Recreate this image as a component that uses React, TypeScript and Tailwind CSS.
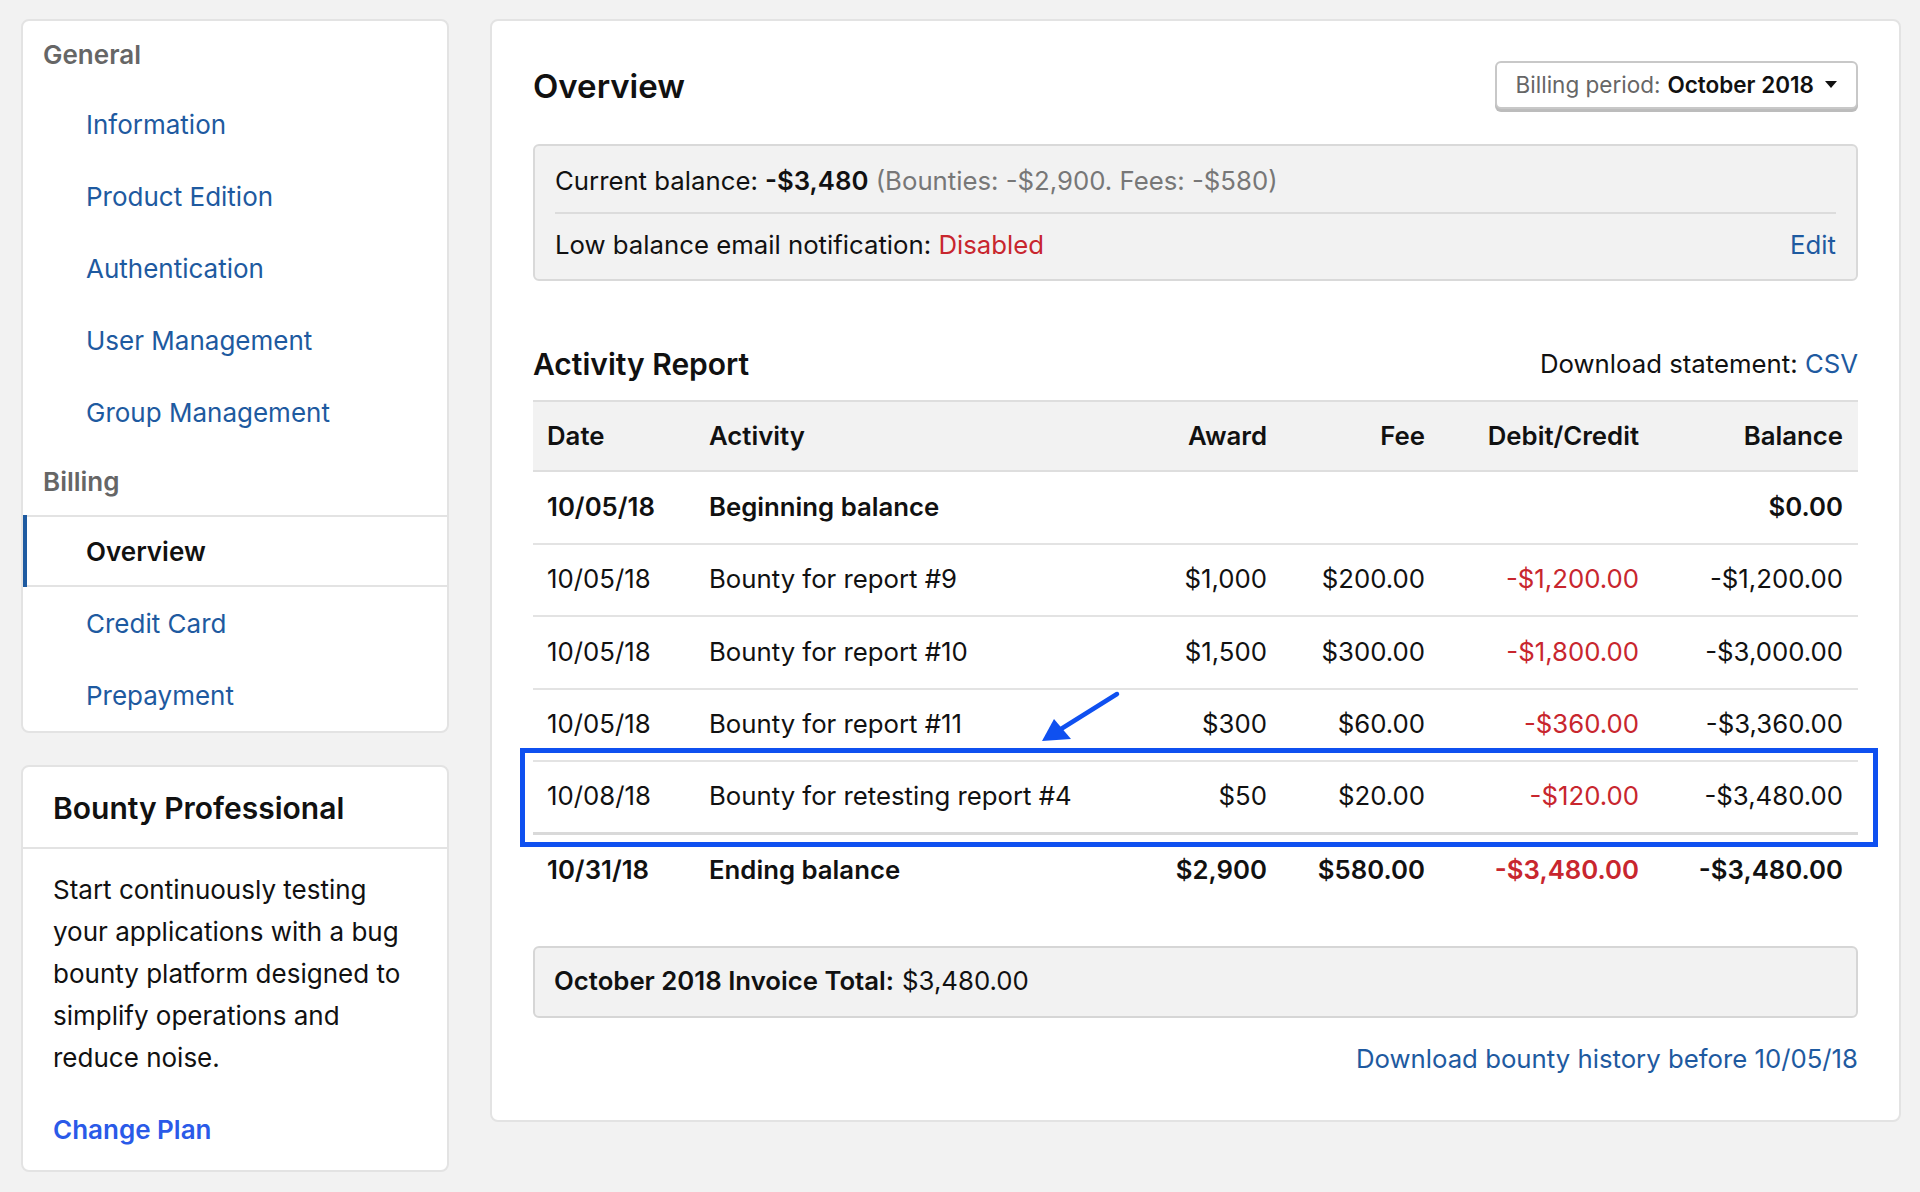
import React from 'react';

type Row = {
  date: string;
  activity: string;
  award: string;
  fee: string;
  debit: string;
  balance: string;
};

const rows: Row[] = [
  { date: '10/05/18', activity: 'Bounty for report #9', award: '$1,000', fee: '$200.00', debit: '-$1,200.00', balance: '-$1,200.00' },
  { date: '10/05/18', activity: 'Bounty for report #10', award: '$1,500', fee: '$300.00', debit: '-$1,800.00', balance: '-$3,000.00' },
  { date: '10/05/18', activity: 'Bounty for report #11', award: '$300', fee: '$60.00', debit: '-$360.00', balance: '-$3,360.00' },
  { date: '10/08/18', activity: 'Bounty for retesting report #4', award: '$50', fee: '$20.00', debit: '-$120.00', balance: '-$3,480.00' },
];

const cols = 'grid grid-cols-[162px_467px_120px_158px_214px_204px] items-center';

function NavHeader({ label }: { label: string }) {
  return (
    <div className="h-[67px] flex items-center pl-[20px] text-[26px] font-semibold text-[#666]">
      {label}
    </div>
  );
}

function NavItem({ label, active }: { label: string; active?: boolean }) {
  if (active) {
    return (
      <div className="relative h-[72px] flex items-center pl-[63px] border-y-2 border-[#e3e3e3] text-[26px] font-semibold text-[#111]">
        <div className="absolute left-0 top-[-2px] bottom-[-2px] w-[4px] bg-[#1e5aa0]" />
        {label}
      </div>
    );
  }
  return (
    <div className="h-[72px] flex items-center pl-[63px] text-[26px] text-[#1e5aa0]">
      {label}
    </div>
  );
}

export default function App() {
  return (
    <div
      className="min-h-screen bg-[#f2f2f2] flex items-start gap-[41px] px-[21px] pt-[19px] text-[#111]"
      style={{ fontFamily: 'Inter, "Noto Sans", sans-serif' }}
    >
      {/* sidebar */}
      <div className="w-[428px] shrink-0 flex flex-col gap-[32px]">
        <div className="bg-white border-2 border-[#e3e3e3] rounded-lg overflow-hidden">
          <NavHeader label="General" />
          <NavItem label="Information" />
          <NavItem label="Product Edition" />
          <NavItem label="Authentication" />
          <NavItem label="User Management" />
          <NavItem label="Group Management" />
          <NavHeader label="Billing" />
          <NavItem label="Overview" active />
          <NavItem label="Credit Card" />
          <NavItem label="Prepayment" />
        </div>

        <div className="bg-white border-2 border-[#e3e3e3] rounded-lg">
          <div className="h-[82px] flex items-center px-[30px] pt-[2px] border-b-2 border-[#e3e3e3] text-[30px] font-semibold">
            Bounty Professional
          </div>
          <div className="px-[30px] pt-[20px] pb-[19px]">
            <p className="text-[26px] leading-[42px] text-[#111]">
              Start continuously testing your applications with a bug bounty platform designed to simplify operations and reduce noise.
            </p>
            <div className="mt-[30px] text-[26px] leading-[42px] font-semibold text-[#2a5ae8]">Change Plan</div>
          </div>
        </div>
      </div>

      {/* main */}
      <div className="flex-1 bg-white border-2 border-[#e3e3e3] rounded-lg px-[41px] pt-[40px] pb-[43px]">
        <div className="flex items-center justify-between h-[51px]">
          <h1 className="text-[33px] font-semibold">Overview</h1>
          <div className="h-[48px] self-start flex items-center gap-[7px] px-[19px] bg-white border-2 border-[#c8c8c8] rounded-md shadow-[0_3px_0_#bcbcbc] text-[22.5px]">
            <span className="text-[#666]">Billing period:</span>
            <span className="font-semibold">October 2018</span>
            <svg width="12" height="8" viewBox="0 0 12 8" className="ml-[4px]">
              <path d="M0 0h12L6 7z" fill="#111" />
            </svg>
          </div>
        </div>

        <div className="mt-[32px] bg-[#f2f2f2] border-2 border-[#d9d9d9] rounded-md px-[20px] text-[25.75px]">
          <div className="pt-[17px] pb-[13px] leading-[36px] border-b-2 border-[#dcdcdc]">
            Current balance: <span className="font-semibold">-$3,480</span>{' '}
            <span className="text-[#777]">(Bounties: -$2,900. Fees: -$580)</span>
          </div>
          <div className="pt-[13px] pb-[16px] leading-[36px] flex justify-between">
            <span>
              Low balance email notification: <span className="text-[#c8262e]">Disabled</span>
            </span>
            <span className="text-[#1e5aa0]">Edit</span>
          </div>
        </div>

        <div className="mt-[65px] mb-[18px] flex items-center justify-between leading-[36px]">
          <h2 className="text-[30px] font-semibold">Activity Report</h2>
          <div className="text-[25.75px]">
            Download statement: <span className="text-[#1e5aa0]">CSV</span>
          </div>
        </div>

        <div className="relative text-[25.75px]">
          <div className={`${cols} h-[72px] bg-[#f2f2f2] border-y-2 border-[#dedede] font-semibold`}>
            <div className="pl-[14px]">Date</div>
            <div className="pl-[14px]">Activity</div>
            <div className="pr-[15px] text-right">Award</div>
            <div className="pr-[15px] text-right">Fee</div>
            <div className="pr-[15px] text-right">Debit/Credit</div>
            <div className="pr-[15px] text-right">Balance</div>
          </div>

          <div className={`${cols} h-[72.5px] border-b-2 border-[#e3e3e3] font-semibold`}>
            <div className="pl-[14px]">10/05/18</div>
            <div className="pl-[14px]">Beginning balance</div>
            <div />
            <div />
            <div />
            <div className="pr-[15px] text-right">$0.00</div>
          </div>

          {rows.map((r, i) => (
            <div
              key={r.activity}
              className={`${cols} h-[72.5px] ${i === rows.length - 1 ? 'border-b-[3px] border-[#d9d9d9]' : 'border-b-2 border-[#e3e3e3]'}`}
            >
              <div className="pl-[14px]">{r.date}</div>
              <div className="pl-[14px]">{r.activity}</div>
              <div className="pr-[15px] text-right">{r.award}</div>
              <div className="pr-[15px] text-right">{r.fee}</div>
              <div className="pr-[15px] text-right text-[#c8262e]">{r.debit}</div>
              <div className="pr-[15px] text-right">{r.balance}</div>
            </div>
          ))}

          <div className={`${cols} h-[72px] font-semibold`}>
            <div className="pl-[14px]">10/31/18</div>
            <div className="pl-[14px]">Ending balance</div>
            <div className="pr-[15px] text-right">$2,900</div>
            <div className="pr-[15px] text-right">$580.00</div>
            <div className="pr-[15px] text-right text-[#c8262e]">-$3,480.00</div>
            <div className="pr-[15px] text-right">-$3,480.00</div>
          </div>

          {/* annotation */}
          <div className="absolute left-[-13px] top-[348px] w-[1358px] h-[99px] border-[5px] border-[#0f50f0] pointer-events-none" />
          <svg className="absolute left-[500px] top-[286px] pointer-events-none" width="95" height="65" viewBox="0 0 95 65">
            <line x1="84" y1="8" x2="28" y2="43" stroke="#0f50f0" strokeWidth="4.5" strokeLinecap="round" />
            <polygon points="9,55 38,53 21,33" fill="#0f50f0" />
          </svg>
        </div>

        <div className="mt-[39px] h-[72px] flex items-center px-[19px] bg-[#f2f2f2] border-2 border-[#d6d6d6] rounded-md text-[25.75px]">
          <span className="font-semibold">October 2018 Invoice Total:</span>
          <span className="ml-[8px]">$3,480.00</span>
        </div>

        <div className="mt-[23px] text-right text-[25.75px] leading-[36px] text-[#1e5aa0]">
          Download bounty history before 10/05/18
        </div>
      </div>
    </div>
  );
}
